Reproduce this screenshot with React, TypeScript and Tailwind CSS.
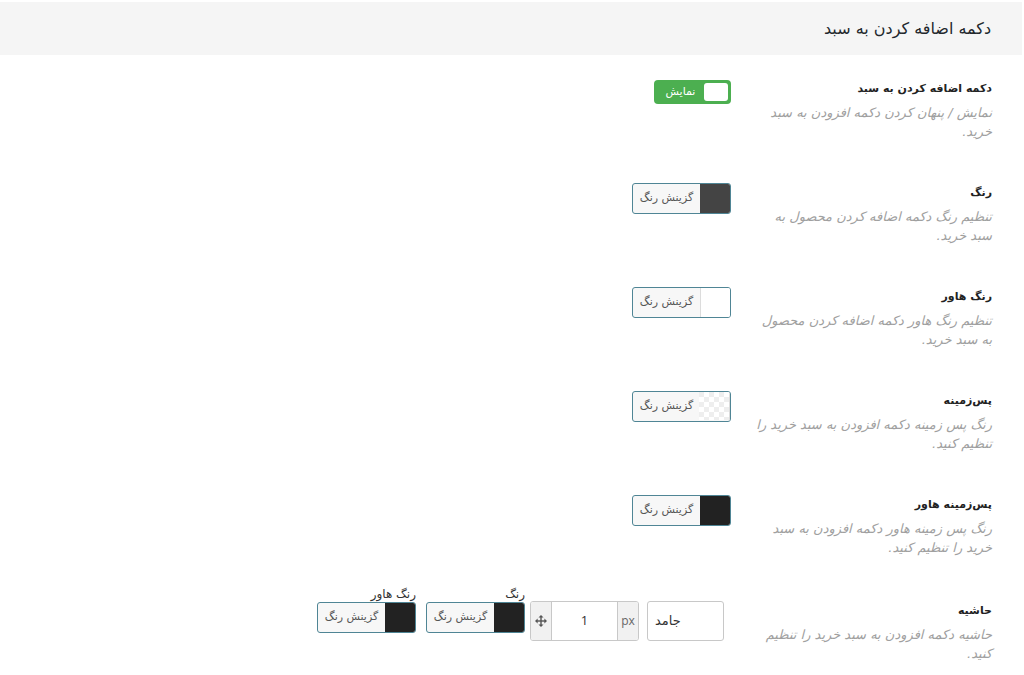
import React from 'react';

const fa = { fontFamily: '"DejaVu Sans", "Noto Sans", sans-serif' };

function Swatch({ kind }: { kind: 'dark' | 'darker' | 'white' | 'clear' }) {
  if (kind === 'clear') {
    return (
      <span className="block w-[30px] h-full border-r border-[#dcdcdc]">
        <svg width="30" height="28" className="block">
          <defs>
            <pattern id="chk" width="10" height="10" patternUnits="userSpaceOnUse">
              <rect width="10" height="10" fill="#ffffff" />
              <rect width="5" height="5" fill="#eeeeee" />
              <rect x="5" y="5" width="5" height="5" fill="#eeeeee" />
            </pattern>
          </defs>
          <rect width="30" height="28" fill="url(#chk)" />
        </svg>
      </span>
    );
  }
  const bg =
    kind === 'dark' ? 'bg-[#444444]' : kind === 'darker' ? 'bg-[#222222]' : 'bg-white border-l border-[#dcdcdc]';
  return <span className={`block w-[30px] h-full ${bg}`} />;
}

function ColorPicker({ kind }: { kind: 'dark' | 'darker' | 'white' | 'clear' }) {
  return (
    <div className="flex h-[31px] w-[99px] rounded-[3px] border border-[#4f8595] overflow-hidden bg-[#f7f7f7]">
      <Swatch kind={kind} />
      <span className="flex-1 flex items-center justify-center text-[11px] text-[#555]" style={fa}>
        گزینش رنگ
      </span>
    </div>
  );
}

function MoveIcon() {
  return (
    <svg width="12" height="12" viewBox="0 0 12 12" fill="#555">
      <rect x="5.3" y="2" width="1.4" height="8" />
      <rect x="2" y="5.3" width="8" height="1.4" />
      <path d="M6 0 L8.5 2.6 L3.5 2.6 Z" />
      <path d="M6 12 L8.5 9.4 L3.5 9.4 Z" />
      <path d="M0 6 L2.6 3.5 L2.6 8.5 Z" />
      <path d="M12 6 L9.4 3.5 L9.4 8.5 Z" />
    </svg>
  );
}

const rows: { label: string; desc: string; control: React.ReactNode }[] = [
  {
    label: 'دکمه اضافه کردن به سبد',
    desc: 'نمایش / پنهان کردن دکمه افزودن به سبد خرید.',
    control: (
      <div className="flex items-center h-[24px] w-[77px] rounded-[4px] bg-[#4caf50] px-[3px] mt-[-2px]">
        <span className="block w-[24px] h-[18px] rounded-[3px] bg-white" />
        <span className="flex-1 text-center text-[11px] text-white" style={fa}>
          نمایش
        </span>
      </div>
    ),
  },
  {
    label: 'رنگ',
    desc: 'تنظیم رنگ دکمه اضافه کردن محصول به سبد خرید.',
    control: <ColorPicker kind="dark" />,
  },
  {
    label: 'رنگ هاور',
    desc: 'تنظیم رنگ هاور دکمه اضافه کردن محصول به سبد خرید.',
    control: <ColorPicker kind="white" />,
  },
  {
    label: 'پس‌زمینه',
    desc: 'رنگ پس زمینه دکمه افزودن به سبد خرید را تنظیم کنید.',
    control: <ColorPicker kind="clear" />,
  },
  {
    label: 'پس‌زمینه هاور',
    desc: 'رنگ پس زمینه هاور دکمه افزودن به سبد خرید را تنظیم کنید.',
    control: <ColorPicker kind="darker" />,
  },
];

export default function App() {
  return (
    <div dir="rtl" className="w-[1024px] h-[675px] bg-white overflow-hidden pt-[2px]" style={fa}>
      <div className="h-[53px] bg-[#f5f5f5] mr-[2px] flex items-center pr-[31px]">
        <h2 className="text-[16px] font-normal text-[#23282d]" style={fa}>
          دکمه اضافه کردن به سبد
        </h2>
      </div>

      <div className="pr-[32px] pt-[27px]">
        {rows.map((r, i) => (
          <div key={r.label} className="flex items-start gap-[24px] h-[104px]">
            <div className="w-[237px] shrink-0">
              <div className="text-[11px] font-bold text-[#222] leading-[14px]">{r.label}</div>
              <p className="mt-[7px] text-[13px] italic text-[#a0a0a0] leading-[19px]">{r.desc}</p>
            </div>
            <div className={i === 0 ? '' : 'mt-[-3px]'}>{r.control}</div>
          </div>
        ))}

        <div className="flex items-start gap-[24px]">
          <div className="w-[237px] shrink-0 pt-[2px]">
            <div className="text-[11px] font-bold text-[#222] leading-[14px]">حاشیه</div>
            <p className="mt-[7px] text-[13px] italic text-[#a0a0a0] leading-[19px]">
              حاشیه دکمه افزودن به سبد خرید را تنظیم کنید.
            </p>
          </div>
          <div className="flex items-start mt-[-1px]">
            <div className="mr-[7px] w-[77px] h-[40px] rounded-[3px] border border-[#c8c8c8] flex items-center justify-end pl-[7px] text-[13px] text-[#333]">
              جامد
            </div>
            <div className="mr-[8px] flex h-[40px] w-[109px] rounded-[3px] border border-[#c8c8c8] overflow-hidden">
              <span className="w-[21px] flex items-center justify-center bg-[#f1f1f1] border-l border-[#c8c8c8] text-[12px] text-[#666]" style={{ fontFamily: '"Open Sans", sans-serif' }}>
                px
              </span>
              <span className="flex-1 flex items-center justify-center text-[13px] text-[#333] bg-white" style={{ fontFamily: '"Open Sans", sans-serif' }}>
                1
              </span>
              <span className="w-[21px] flex items-center justify-center bg-[#f1f1f1] border-r border-[#c8c8c8]">
                <MoveIcon />
              </span>
            </div>
            <div className="mr-[5px] flex flex-col items-start mt-[-14px]">
              <span className="text-[12px] text-[#333] leading-[14px] mb-[1px]">رنگ</span>
              <ColorPicker kind="darker" />
            </div>
            <div className="mr-[10px] flex flex-col items-start mt-[-14px]">
              <span className="text-[12px] text-[#333] leading-[14px] mb-[1px]">رنگ هاور</span>
              <ColorPicker kind="darker" />
            </div>
          </div>
        </div>
      </div>
    </div>
  );
}
